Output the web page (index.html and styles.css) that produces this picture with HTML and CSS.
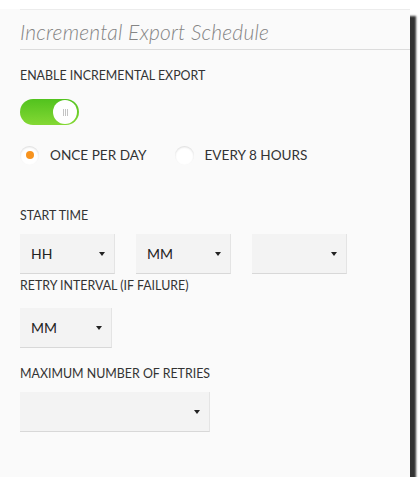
FILE: index.html
```html
<!DOCTYPE html>
<html lang="en">
<head>
  <meta charset="UTF-8">
  <meta name="viewport" content="width=device-width, initial-scale=1.0">
  <title>Incremental Export Schedule</title>
  <link rel="stylesheet" href="styles.css">
</head>
<body>
  <div class="panel">
    <div class="panel_head">
      <h2 class="panel_title">Incremental Export Schedule</h2>
    </div>

    <div class="field enable">
      <label class="field_label">ENABLE INCREMENTAL EXPORT</label>
      <div class="toggle on">
        <span class="toggle_knob"><i></i><i></i><i></i></span>
      </div>
    </div>

    <div class="radios">
      <label class="radio checked"><span class="radio_dot"></span>ONCE PER DAY</label>
      <label class="radio"><span class="radio_dot"></span>EVERY 8 HOURS</label>
    </div>

    <div class="field start_time">
      <label class="field_label">START TIME</label>
      <div class="select_row">
        <div class="select"><span>HH</span><i class="caret"></i></div>
        <div class="select"><span>MM</span><i class="caret"></i></div>
        <div class="select"><span></span><i class="caret"></i></div>
      </div>
    </div>

    <div class="field retry">
      <label class="field_label">RETRY INTERVAL (IF FAILURE)</label>
      <div class="select small"><span>MM</span><i class="caret"></i></div>
    </div>

    <div class="field max_retries">
      <label class="field_label">MAXIMUM NUMBER OF RETRIES</label>
      <div class="select wide"><span></span><i class="caret"></i></div>
    </div>
  </div>
</body>
</html>
```

FILE: styles.css
```css
* {margin: 0; padding: 0; box-sizing: border-box;}
body {background: #fff; font-family: Lato, "Liberation Sans", sans-serif; color: #333;}

.panel {width: 410px; height: 468px; background: #fafafa; padding-left: 20px; box-shadow: 6px 7px 2px rgba(0,0,0,0.8);}

.panel_head {margin-top: 9px; border-top: 1px solid #ececec; border-bottom: 1px solid #dcdcdc; height: 41px; display: flex; align-items: center;}
.panel_title {font-size: 21px; font-weight: 300; font-style: italic; color: #858585; padding-top: 4px; letter-spacing: 0.2px;}

.field_label {display: block; font-size: 12.4px; line-height: 16px; color: #333;}
.enable {margin-top: 18px;}

.toggle {width: 59px; height: 26px; border-radius: 13px; margin-top: 15px; background: linear-gradient(#52c21e, #84d834); display: flex; align-items: center; justify-content: flex-end; padding-right: 2px;}
.toggle_knob {width: 24px; height: 24px; border-radius: 50%; background: #fff; display: flex; align-items: center; justify-content: center; gap: 1px;}
.toggle_knob i {width: 1px; height: 7px; background: #c4c4c4;}

.radios {display: flex; margin-top: 20px; height: 20px; align-items: center;}
.radio {display: flex; align-items: center; font-size: 13.6px; color: #333; margin-right: 28px;}
.radio_dot {width: 19px; height: 19px; border-radius: 50%; background: #fff; box-shadow: inset 0 1px 2px rgba(0,0,0,0.15); margin-right: 11px; display: flex; align-items: center; justify-content: center;}
.radio.checked .radio_dot::after {content: ""; width: 8px; height: 8px; border-radius: 50%; background: #f7931e;}

.start_time {margin-top: 43px;}
.select_row {display: flex; gap: 21px; margin-top: 10px;}
.select {width: 95px; height: 40px; background: #f3f3f3; border-right: 1px solid #e4e4e4; border-bottom: 1px solid #d8d8d8; display: flex; align-items: center; justify-content: space-between; padding: 0 9px 0 11px; font-size: 14px; color: #222;}
.retry {margin-top: 4px;}
.select.small {width: 92px; margin-top: 14px;}
.max_retries {margin-top: 18px;}
.select.wide {width: 190px; margin-top: 10px;}
.caret {width: 0; height: 0; border-left: 3px solid transparent; border-right: 3px solid transparent; border-top: 4px solid #222;}
```
